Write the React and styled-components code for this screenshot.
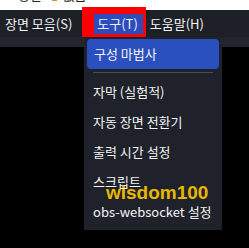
import React from "react";
import styled, { createGlobalStyle } from "styled-components";

const GlobalStyle = createGlobalStyle`
  html, body {
    margin: 0;
    padding: 0;
    background: #000;
  }
  body {
    font-family: "Noto Sans CJK KR", "Noto Sans", sans-serif;
  }
`;

const Screen = styled.div`
  position: relative;
  width: 249px;
  height: 248px;
  overflow: hidden;
  background: #000;
  display: flex;
  flex-direction: column;
`;

const TopStrip = styled.div`
  height: 10px;
  background: #fff;
  overflow: hidden;
  display: flex;
  align-items: flex-end;
  padding: 0 0 7px 18px;
  box-sizing: border-box;
`;

const StatusText = styled.div`
  display: flex;
  align-items: center;
  gap: 6px;
  font-size: 13px;
  line-height: 16px;
  height: 16px;
  flex-shrink: 0;
  color: #222;
`;

const Swatch = styled.span`
  display: inline-block;
  width: 5px;
  height: 12px;
  background: #f08a12;
`;

const MenuBar = styled.div`
  position: relative;
  height: 27px;
  background: #1e2028;
  display: flex;
  align-items: center;
  padding-left: 5px;
  color: #f2f2f2;
  font-size: 13px;
`;

const Annotation = styled.div`
  position: absolute;
  left: 82px;
  top: -3px;
  width: 64px;
  height: 30px;
  background: #ff0000;
`;

const MenuTitle = styled.div`
  position: relative;
  height: 20px;
  line-height: 20px;
  padding: ${({ $active }) => ($active ? "0 5px 0 3px" : "0")};
  margin-left: ${({ $gap }) => $gap || 0}px;
  background: ${({ $active }) => ($active ? "#2a4cbd" : "transparent")};
  white-space: nowrap;
`;

const SubBar = styled.div`
  height: 10px;
  background: #23262e;
`;

const Dropdown = styled.div`
  position: absolute;
  left: 84px;
  top: 37px;
  width: 138px;
  padding: 2px 3px 3px;
  box-sizing: border-box;
  background: #1f222a;
  display: flex;
  flex-direction: column;
  color: #f4f4f4;
  font-size: 13px;
`;

const Item = styled.div`
  height: 30px;
  line-height: 30px;
  padding-left: ${({ $active }) => ($active ? 7 : 6)}px;
  border-radius: 4px;
  background: ${({ $active }) => ($active ? "#2a4fbf" : "transparent")};
  white-space: nowrap;
`;

const Separator = styled.div`
  height: 1px;
  margin: 3px 6px 4px;
  background: #4a4d56;
`;

const Watermark = styled.div`
  position: absolute;
  left: 106px;
  top: 181px;
  font-family: "Liberation Sans", Arial, sans-serif;
  font-weight: 700;
  font-size: 19px;
  line-height: 24px;
  color: #e8b800;
  pointer-events: none;
`;

const items = [
  "자막 (실험적)",
  "자동 장면 전환기",
  "출력 시간 설정",
  "스크립트",
  "obs-websocket 설정",
];

export default function App() {
  return (
    <>
      <GlobalStyle />
      <Screen>
        <TopStrip>
          <StatusText>
            <span>상단:</span>
            <Swatch />
            <span>없음</span>
          </StatusText>
        </TopStrip>
        <MenuBar>
          <Annotation />
          <MenuTitle>장면 모음(S)</MenuTitle>
          <MenuTitle $active $gap={22}>도구(T)</MenuTitle>
          <MenuTitle $gap={7}>도움말(H)</MenuTitle>
        </MenuBar>
        <SubBar />
        <Dropdown>
          <Item $active>구성 마법사</Item>
          <Separator />
          {items.map((label) => (
            <Item key={label}>{label}</Item>
          ))}
        </Dropdown>
        <Watermark>wisdom100</Watermark>
      </Screen>
    </>
  );
}
